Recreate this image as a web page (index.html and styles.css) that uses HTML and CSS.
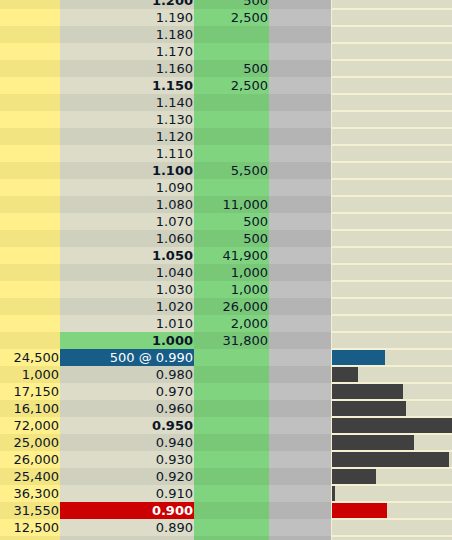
FILE: index.html
```html
<!DOCTYPE html>
<html>
<head>
<meta charset="utf-8">
<link rel="stylesheet" href="styles.css">
</head>
<body>
<div class="ladder">
  <div class="r d"><div class="y"></div><div class="p b">1.200</div><div class="g">500</div><div class="s"></div><div class="bc"><div class="bx"></div></div></div>
  <div class="r"><div class="y"></div><div class="p">1.190</div><div class="g">2,500</div><div class="s"></div><div class="bc"><div class="bx"></div></div></div>
  <div class="r d"><div class="y"></div><div class="p">1.180</div><div class="g"></div><div class="s"></div><div class="bc"><div class="bx"></div></div></div>
  <div class="r"><div class="y"></div><div class="p">1.170</div><div class="g"></div><div class="s"></div><div class="bc"><div class="bx"></div></div></div>
  <div class="r d"><div class="y"></div><div class="p">1.160</div><div class="g">500</div><div class="s"></div><div class="bc"><div class="bx"></div></div></div>
  <div class="r"><div class="y"></div><div class="p b">1.150</div><div class="g">2,500</div><div class="s"></div><div class="bc"><div class="bx"></div></div></div>
  <div class="r d"><div class="y"></div><div class="p">1.140</div><div class="g"></div><div class="s"></div><div class="bc"><div class="bx"></div></div></div>
  <div class="r"><div class="y"></div><div class="p">1.130</div><div class="g"></div><div class="s"></div><div class="bc"><div class="bx"></div></div></div>
  <div class="r d"><div class="y"></div><div class="p">1.120</div><div class="g"></div><div class="s"></div><div class="bc"><div class="bx"></div></div></div>
  <div class="r"><div class="y"></div><div class="p">1.110</div><div class="g"></div><div class="s"></div><div class="bc"><div class="bx"></div></div></div>
  <div class="r d"><div class="y"></div><div class="p b">1.100</div><div class="g">5,500</div><div class="s"></div><div class="bc"><div class="bx"></div></div></div>
  <div class="r"><div class="y"></div><div class="p">1.090</div><div class="g"></div><div class="s"></div><div class="bc"><div class="bx"></div></div></div>
  <div class="r d"><div class="y"></div><div class="p">1.080</div><div class="g">11,000</div><div class="s"></div><div class="bc"><div class="bx"></div></div></div>
  <div class="r"><div class="y"></div><div class="p">1.070</div><div class="g">500</div><div class="s"></div><div class="bc"><div class="bx"></div></div></div>
  <div class="r d"><div class="y"></div><div class="p">1.060</div><div class="g">500</div><div class="s"></div><div class="bc"><div class="bx"></div></div></div>
  <div class="r"><div class="y"></div><div class="p b">1.050</div><div class="g">41,900</div><div class="s"></div><div class="bc"><div class="bx"></div></div></div>
  <div class="r d"><div class="y"></div><div class="p">1.040</div><div class="g">1,000</div><div class="s"></div><div class="bc"><div class="bx"></div></div></div>
  <div class="r"><div class="y"></div><div class="p">1.030</div><div class="g">1,000</div><div class="s"></div><div class="bc"><div class="bx"></div></div></div>
  <div class="r d"><div class="y"></div><div class="p">1.020</div><div class="g">26,000</div><div class="s"></div><div class="bc"><div class="bx"></div></div></div>
  <div class="r"><div class="y"></div><div class="p">1.010</div><div class="g">2,000</div><div class="s"></div><div class="bc"><div class="bx"></div></div></div>
  <div class="r d"><div class="y"></div><div class="p b cur">1.000</div><div class="g">31,800</div><div class="s"></div><div class="bc"><div class="bx"></div></div></div>
  <div class="r"><div class="y">24,500</div><div class="p sel">500 @ 0.990</div><div class="g"></div><div class="s"></div><div class="bc"><div class="bx"><div class="bar blue" style="width:53px"></div></div></div></div>
  <div class="r d"><div class="y">1,000</div><div class="p">0.980</div><div class="g"></div><div class="s"></div><div class="bc"><div class="bx"><div class="bar" style="width:26px"></div></div></div></div>
  <div class="r"><div class="y">17,150</div><div class="p">0.970</div><div class="g"></div><div class="s"></div><div class="bc"><div class="bx"><div class="bar" style="width:71px"></div></div></div></div>
  <div class="r d"><div class="y">16,100</div><div class="p">0.960</div><div class="g"></div><div class="s"></div><div class="bc"><div class="bx"><div class="bar" style="width:74px"></div></div></div></div>
  <div class="r"><div class="y">72,000</div><div class="p b">0.950</div><div class="g"></div><div class="s"></div><div class="bc"><div class="bx"><div class="bar" style="width:120px"></div></div></div></div>
  <div class="r d"><div class="y">25,000</div><div class="p">0.940</div><div class="g"></div><div class="s"></div><div class="bc"><div class="bx"><div class="bar" style="width:82px"></div></div></div></div>
  <div class="r"><div class="y">26,000</div><div class="p">0.930</div><div class="g"></div><div class="s"></div><div class="bc"><div class="bx"><div class="bar" style="width:117px"></div></div></div></div>
  <div class="r d"><div class="y">25,400</div><div class="p">0.920</div><div class="g"></div><div class="s"></div><div class="bc"><div class="bx"><div class="bar" style="width:44px"></div></div></div></div>
  <div class="r"><div class="y">36,300</div><div class="p">0.910</div><div class="g"></div><div class="s"></div><div class="bc"><div class="bx"><div class="bar" style="width:3px"></div></div></div></div>
  <div class="r d"><div class="y">31,550</div><div class="p b hit">0.900</div><div class="g"></div><div class="s"></div><div class="bc"><div class="bx"><div class="bar red" style="width:55px"></div></div></div></div>
  <div class="r"><div class="y">12,500</div><div class="p">0.890</div><div class="g"></div><div class="s"></div><div class="bc"><div class="bx"></div></div></div>
  <div class="r d"><div class="y"></div><div class="p"></div><div class="g"></div><div class="s"></div><div class="bc"><div class="bx"></div></div></div>
</div>
</body>
</html>
```

FILE: styles.css
```css
html, body {
  margin: 0;
  padding: 0;
  overflow: hidden;
  background: #dcdcc8;
}
.ladder {
  margin-top: -8px;
  font-family: "DejaVu Sans", Verdana, sans-serif;
  font-size: 13px;
  color: #0c1628;
}
.r {
  display: grid;
  grid-template-columns: 60px 134px 75px 62px 121px;
  height: 17px;
  line-height: 17px;
}
.r > div {
  text-align: right;
  white-space: nowrap;
  overflow: hidden;
}
.y, .p, .g {
  padding-right: 1px;
  padding-top: 1px;
  line-height: 16px;
}
.y { background: #fff08c; }
.p { background: #dcdcc8; }
.g { background: #80d480; }
.s { background: #c0c0c0; }
.d .y { background: #f2e480; }
.d .p { background: #d0d0be; }
.d .g { background: #78c878; }
.d .s { background: #b4b4b4; }
.b { font-weight: bold; }
.r .p.cur { background: #80d480; }
.r .p.sel { background: #175d87; color: #ffffff; }
.r .p.hit { background: #cc0000; color: #ffffff; }
.bc {
  background: #f5f0d2;
  padding: 1px 0 1px 1px;
}
.bx {
  background: #dcdcc6;
  height: 15px;
}
.bar {
  height: 15px;
  background: #404040;
}
.bar.blue { background: #175d87; }
.bar.red { background: #cc0000; }
```
